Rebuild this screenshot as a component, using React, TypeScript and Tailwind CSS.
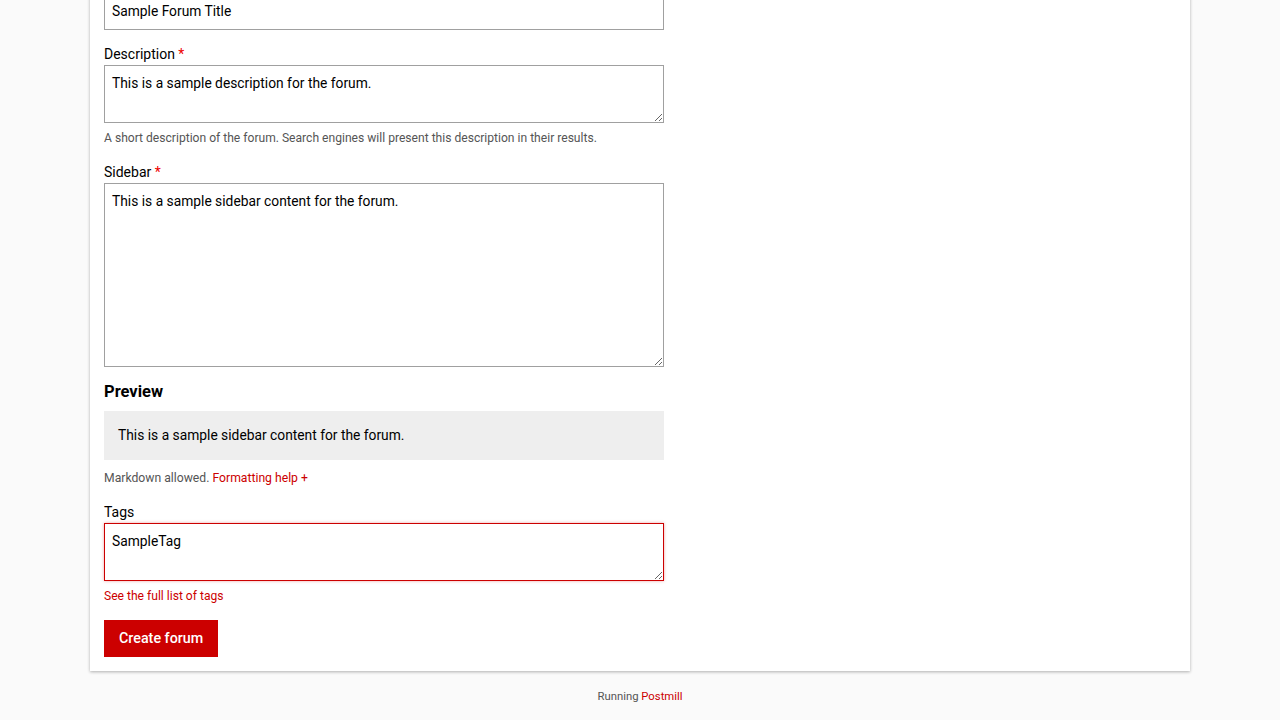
import React from 'react';

const field =
  'block w-[560px] border border-[#a0a0a0] bg-white px-[7px] pt-[7px] pb-[8px] text-[13.8px] leading-[20px] text-black outline-none';

export default function App() {
  return (
    <div className="min-h-screen bg-[#fafafa] font-['Roboto',sans-serif] text-black">
      <div className="mx-auto w-[1100px] bg-white px-[14px] pb-[14px] shadow-[0_1px_3px_rgba(0,0,0,0.3)]">
        <input
          className={`${field} -mt-[8px] h-[38px]`}
          defaultValue="Sample Forum Title"
          readOnly
        />

        <label className="mt-[14px] block text-[14px] leading-[20px]">
          Description <span className="text-[#e00]">*</span>
        </label>
        <textarea
          className={`${field} mt-[1px] h-[58px]`}
          defaultValue="This is a sample description for the forum."
          readOnly
        />
        <p className="mt-[7px] text-[12.1px] leading-[16px] text-[#555]">
          A short description of the forum. Search engines will present this description in their results.
        </p>

        <label className="mt-[16px] block text-[14px] leading-[20px]">
          Sidebar <span className="text-[#e00]">*</span>
        </label>
        <textarea
          className={`${field} mt-[1px] h-[184px]`}
          defaultValue="This is a sample sidebar content for the forum."
          readOnly
        />

        <h2 className="mt-[13px] text-[16.5px] font-bold leading-[24px]">Preview</h2>
        <div className="mt-[7px] h-[49px] w-[560px] bg-[#eeeeee] px-[14px] py-[14px] text-[13.8px] leading-[20px]">
          This is a sample sidebar content for the forum.
        </div>
        <p className="mt-[10px] text-[12.2px] leading-[16px] text-[#555]">
          Markdown allowed. <a className="text-[#c00]">Formatting help +</a>
        </p>

        <label className="mt-[16px] block text-[14px] leading-[20px]">Tags</label>
        <textarea
          className={`${field} mt-[1px] h-[58px] border-[#cc0000] shadow-[0_0_3px_rgba(204,0,0,0.35)]`}
          defaultValue="SampleTag"
          readOnly
        />
        <p className="mt-[7px] text-[12.1px] leading-[16px]">
          <a className="text-[#c00]">See the full list of tags</a>
        </p>

        <button
          type="button"
          className="mt-[16px] h-[37px] bg-[#cc0000] px-[15px] text-[14.3px] font-medium text-white"
        >
          Create forum
        </button>
      </div>

      <footer className="pt-[17px] pb-[16px] text-center text-[11.3px] leading-[18px] text-[#555]">
        Running <a className="text-[#c00]">Postmill</a>
      </footer>
    </div>
  );
}
